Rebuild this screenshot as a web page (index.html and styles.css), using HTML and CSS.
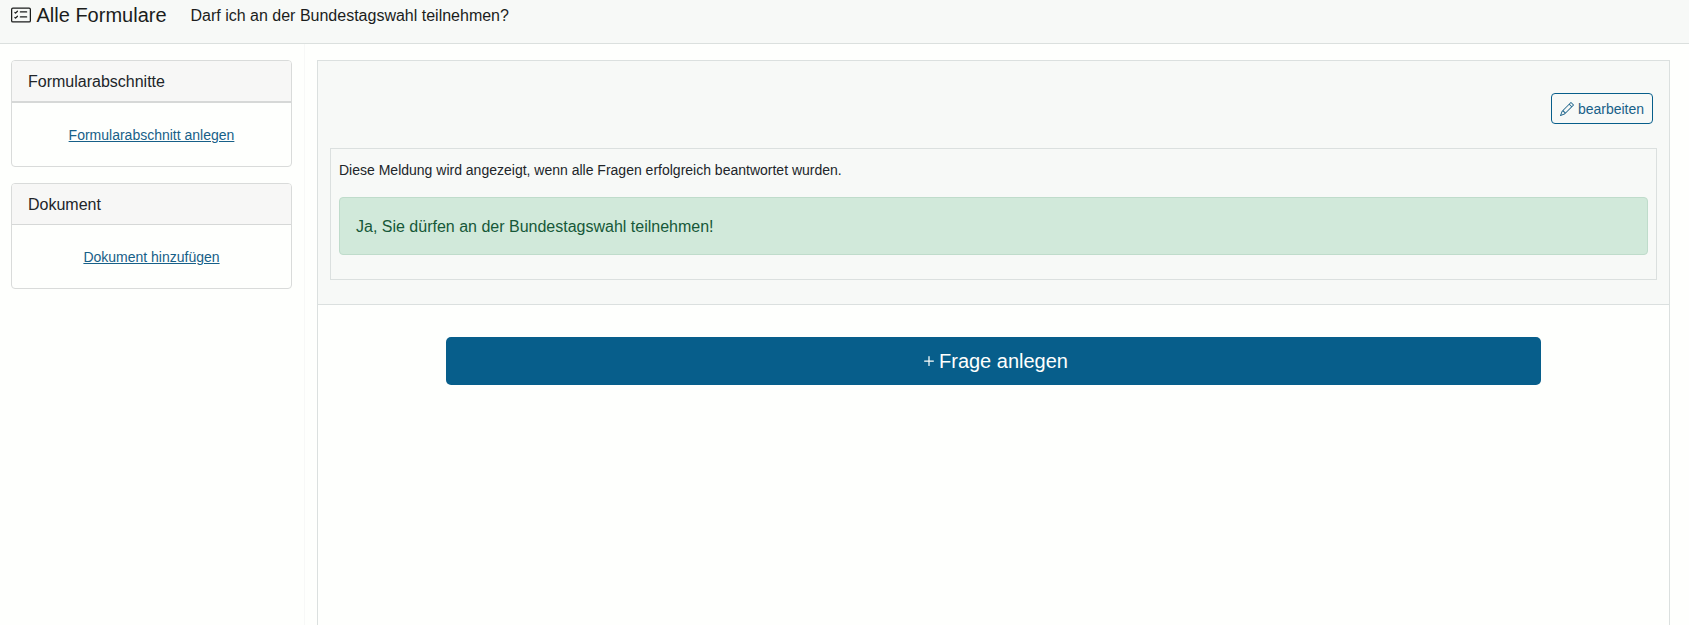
FILE: index.html
```html
<!DOCTYPE html>
<html lang="de">
<head>
<meta charset="utf-8">
<title>Formular bearbeiten</title>
<link rel="stylesheet" href="styles.css">
</head>
<body>
<header class="topbar">
  <a class="brand"><svg class="brand-icon" viewBox="0 0 16 16" fill="currentColor"><path d="M14.500 3a.5.5 0 0 1 .5.5v9a.5.5 0 0 1-.5.5h-13a.5.5 0 0 1-.5-.5v-9a.5.5 0 0 1 .5-.5h13zm-13-1A1.500 1.500 0 0 0 0 3.500v9A1.500 1.500 0 0 0 1.500 14h13a1.500 1.500 0 0 0 1.500-1.500v-9A1.500 1.500 0 0 0 14.500 2h-13z"/><path d="M7 5.500a.5.5 0 0 1 .5-.5h5a.5.5 0 0 1 0 1h-5a.5.5 0 0 1-.5-.5zm-1.496-.854a.5.5 0 0 1 0 .708l-1.500 1.500a.5.5 0 0 1-.708 0l-.5-.5a.5.5 0 1 1 .708-.708l.146.147 1.146-1.147a.5.5 0 0 1 .708 0zM7 9.500a.5.5 0 0 1 .5-.5h5a.5.5 0 0 1 0 1h-5a.5.5 0 0 1-.5-.5zm-1.496-.854a.5.5 0 0 1 0 .708l-1.500 1.500a.5.5 0 0 1-.708 0l-.5-.5a.5.5 0 0 1 .708-.708l.146.147 1.146-1.147a.5.5 0 0 1 .708 0z"/></svg>Alle Formulare</a>
  <span class="form-title">Darf ich an der Bundestagswahl teilnehmen?</span>
</header>
<div class="layout">
  <aside class="sidebar">
    <section class="card">
      <h2 class="card-header card-header-list">Formularabschnitte</h2>
      <div class="card-body"><a class="link">Formularabschnitt anlegen</a></div>
    </section>
    <section class="card">
      <h2 class="card-header">Dokument</h2>
      <div class="card-body"><a class="link">Dokument hinzufügen</a></div>
    </section>
  </aside>
  <main class="content">
    <section class="result">
      <div class="actions">
        <button class="edit"><svg class="edit-icon" viewBox="0 0 16 16" fill="currentColor"><path d="M12.146.146a.5.5 0 0 1 .708 0l3 3a.5.5 0 0 1 0 .708l-10 10a.5.5 0 0 1-.168.110l-5 2a.5.5 0 0 1-.650-.650l2-5a.5.5 0 0 1 .110-.168l10-10zM11.207 2.500 13.500 4.793 14.793 3.500 12.500 1.207 11.207 2.500zm1.586 3L10.500 3.207 4 9.707V10h.5a.5.5 0 0 1 .5.5v.5h.5a.5.5 0 0 1 .5.5v.5h.293l6.500-6.500zm-9.761 5.175-.106.106-1.528 3.821 3.821-1.528.106-.106A.5.5 0 0 1 5 12.500V12h-.5a.5.5 0 0 1-.5-.5V11h-.5a.5.5 0 0 1-.468-.325z"/></svg>bearbeiten</button>
      </div>
      <div class="message">
        <p class="hint">Diese Meldung wird angezeigt, wenn alle Fragen erfolgreich beantwortet wurden.</p>
        <div class="alert">Ja, Sie dürfen an der Bundestagswahl teilnehmen!</div>
      </div>
    </section>
    <button class="add"><svg class="add-icon" viewBox="0 0 16 16" fill="currentColor"><path d="M8 4a.5.5 0 0 1 .5.5v3h3a.5.5 0 0 1 0 1h-3v3a.5.5 0 0 1-1 0v-3h-3a.5.5 0 0 1 0-1h3v-3A.5.5 0 0 1 8 4z"/></svg>Frage anlegen</button>
  </main>
</div>
</body>
</html>
```
FILE: styles.css
```css
* { box-sizing: border-box; }
body {
  margin: 0;
  height: 100vh;
  overflow: hidden;
  display: flex;
  flex-direction: column;
  background: #fefffd;
  color: #212529;
  font: 16px/24px "Liberation Sans", Arial, sans-serif;
}
.topbar {
  display: flex;
  align-items: flex-start;
  flex: none;
  height: 44px;
  padding: 0 11px;
  background: #f7f9f7;
  border-bottom: 1px solid #dbe0de;
  color: #1b1d1c;
}
.brand {
  display: flex;
  align-items: center;
  gap: 5.5px;
  width: 179.5px;
  font-size: 20px;
  line-height: 30px;
}
.brand-icon { width: 20px; height: 20px; }
.form-title { line-height: 31px; }
.layout { display: flex; flex: 1; min-height: 0; }
.sidebar {
  display: flex;
  flex-direction: column;
  gap: 16px;
  flex: none;
  width: 305px;
  padding: 16px 12px 0 11px;
  border-right: 1px solid #f7f8f7;
}
.card {
  border: 1px solid #d9dbda;
  border-radius: 4px;
  overflow: hidden;
}
.card-header {
  margin: 0;
  padding: 9px 16px 7px;
  height: 41px;
  background: #f7f7f6;
  border-bottom: 1px solid #d6d8d7;
  font-size: 16px;
  font-weight: 400;
}
.card-header-list { height: 42px; border-bottom-width: 2px; }
.card-body {
  display: flex;
  justify-content: center;
  height: 63px;
  padding: 22px 0 20px;
  font-size: 14px;
  line-height: 21px;
}
.link { color: #176088; text-decoration: underline; }
.content {
  flex: 1;
  display: flex;
  flex-direction: column;
  margin: 16px 19px 0 12px;
  border: 1px solid #dbe0df;
  border-bottom: 0;
}
.result {
  padding: 32px 12px 24px;
  background: #f7f9f7;
  border-bottom: 1px solid #dbe0df;
}
.actions {
  display: flex;
  justify-content: flex-end;
  padding-right: 4px;
  margin-bottom: 24px;
}
.edit {
  display: flex;
  align-items: center;
  justify-content: center;
  gap: 4px;
  width: 102px;
  height: 31px;
  padding: 1px 0 0;
  border: 1px solid #075e8b;
  border-radius: 4px;
  background: transparent;
  color: #176088;
  font: 14px/21px "Liberation Sans", Arial, sans-serif;
}
.edit-icon { width: 14px; height: 14px; margin-bottom: 1px; }
.message {
  height: 132px;
  padding: 11px 8px 24px;
  border: 1px solid #dbe0df;
}
.hint { margin: 0 0 16px; font-size: 14px; line-height: 21px; }
.alert {
  padding: 17px 16px 15px;
  border: 1px solid #bfdccb;
  border-radius: 4px;
  background: #d1e9da;
  color: #165838;
}
.add {
  display: flex;
  align-items: center;
  justify-content: center;
  align-self: center;
  width: 1095px;
  height: 48px;
  margin-top: 32px;
  padding: 0;
  border: 0;
  border-radius: 5px;
  background: #075e8b;
  color: #fefffd;
  font: 20px/30px "Liberation Sans", Arial, sans-serif;
}
.add-icon { width: 20px; height: 20px; }
```
